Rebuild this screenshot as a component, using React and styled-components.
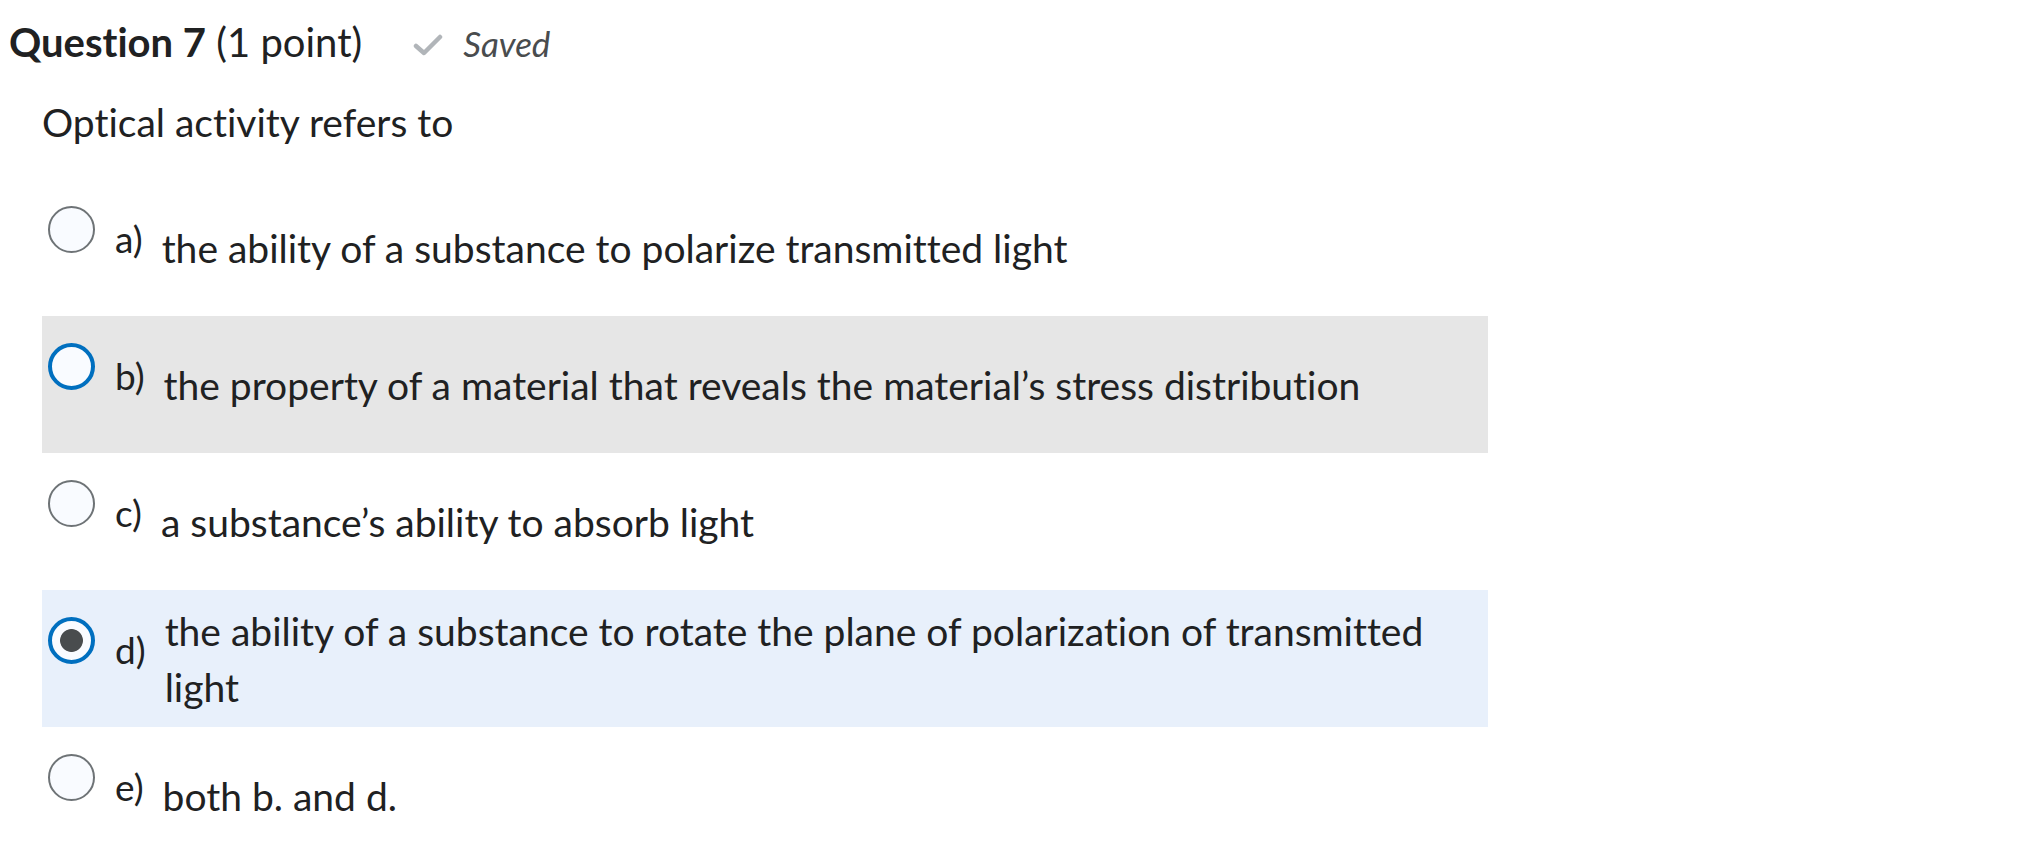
import styled, { createGlobalStyle } from "styled-components";

const GlobalStyle = createGlobalStyle`
  body {
    margin: 0;
    background: #ffffff;
    font-family: Lato, "Noto Sans", sans-serif;
    font-variant-ligatures: no-common-ligatures;
    color: #202122;
  }
`;

const choices = [
  { key: "a", text: "the ability of a substance to polarize transmitted light" },
  {
    key: "b",
    text: "the property of a material that reveals the material’s stress distribution",
    tone: "hover",
  },
  { key: "c", text: "a substance’s ability to absorb light" },
  {
    key: "d",
    text: "the ability of a substance to rotate the plane of polarization of transmitted light",
    tone: "selected",
  },
  { key: "e", text: "both b. and d." },
];

const tones = {
  hover: "#e6e6e6",
  selected: "#e8f0fb",
};

function CheckIcon() {
  return (
    <svg width="30" height="22" viewBox="0 0 30 22" fill="none">
      <polyline
        points="3,12 11,19 27,3"
        stroke="#b1b5b9"
        strokeWidth="4.5"
        strokeLinecap="round"
        strokeLinejoin="round"
      />
    </svg>
  );
}

export default function App() {
  return (
    <Page>
      <GlobalStyle />
      <Header>
        <Title>
          <strong>Question 7</strong> (1 point)
        </Title>
        <SavedStatus>
          <CheckIcon />
          <SavedText>Saved</SavedText>
        </SavedStatus>
      </Header>
      <Body>
        <Prompt>Optical activity refers to</Prompt>
        <ChoiceList>
          {choices.map((choice) => (
            <ChoiceRow key={choice.key} $tone={choice.tone}>
              <ChoiceControl>
                <Radio
                  $focused={choice.tone === "hover" || choice.tone === "selected"}
                  $checked={choice.tone === "selected"}
                />
                {choice.key})
              </ChoiceControl>
              <ChoiceText>{choice.text}</ChoiceText>
            </ChoiceRow>
          ))}
        </ChoiceList>
      </Body>
    </Page>
  );
}

const Page = styled.div`
  padding: 19px 0 0 9px;
`;

const Header = styled.div`
  display: flex;
  align-items: baseline;
  gap: 51px;
`;

const Title = styled.h2`
  margin: 0;
  font-size: 40px;
  font-weight: 400;
  line-height: 47px;

  strong {
    font-weight: 700;
  }
`;

const SavedStatus = styled.div`
  display: flex;
  align-items: baseline;
  gap: 20px;

  svg {
    align-self: center;
    margin-top: 4px;
  }
`;

const SavedText = styled.span`
  font-size: 35px;
  font-style: italic;
  color: #494c4e;
`;

const Body = styled.div`
  padding-left: 33px;
`;

const Prompt = styled.p`
  margin: 28px 0 29px;
  font-size: 39px;
  line-height: 56px;
`;

const ChoiceList = styled.div`
  display: flex;
  flex-direction: column;
  width: 1446px;
`;

const ChoiceRow = styled.div`
  display: flex;
  align-items: flex-start;
  box-sizing: border-box;
  min-height: 137px;
  padding: 0 20px 0 6px;
  background: ${({ $tone }) => tones[$tone] || "transparent"};
`;

const ChoiceControl = styled.div`
  flex-shrink: 0;
  padding-top: 27px;
  font-size: 37px;
  line-height: 56px;
  white-space: nowrap;
`;

const Radio = styled.span`
  display: inline-block;
  vertical-align: baseline;
  box-sizing: border-box;
  width: 47px;
  height: 47px;
  margin-right: 20px;
  border-radius: 50%;
  border: ${({ $focused }) => ($focused ? "4px solid #006fbf" : "2px solid #6e7376")};
  background: ${({ $checked }) =>
    $checked
      ? "radial-gradient(circle, #494c4e 0, #494c4e 11px, #f9fbff 11.8px)"
      : "#f9fbff"};
`;

const ChoiceText = styled.div`
  align-self: center;
  padding: 11px 0 11px 19px;
  font-size: 39px;
  line-height: 56px;
`;
